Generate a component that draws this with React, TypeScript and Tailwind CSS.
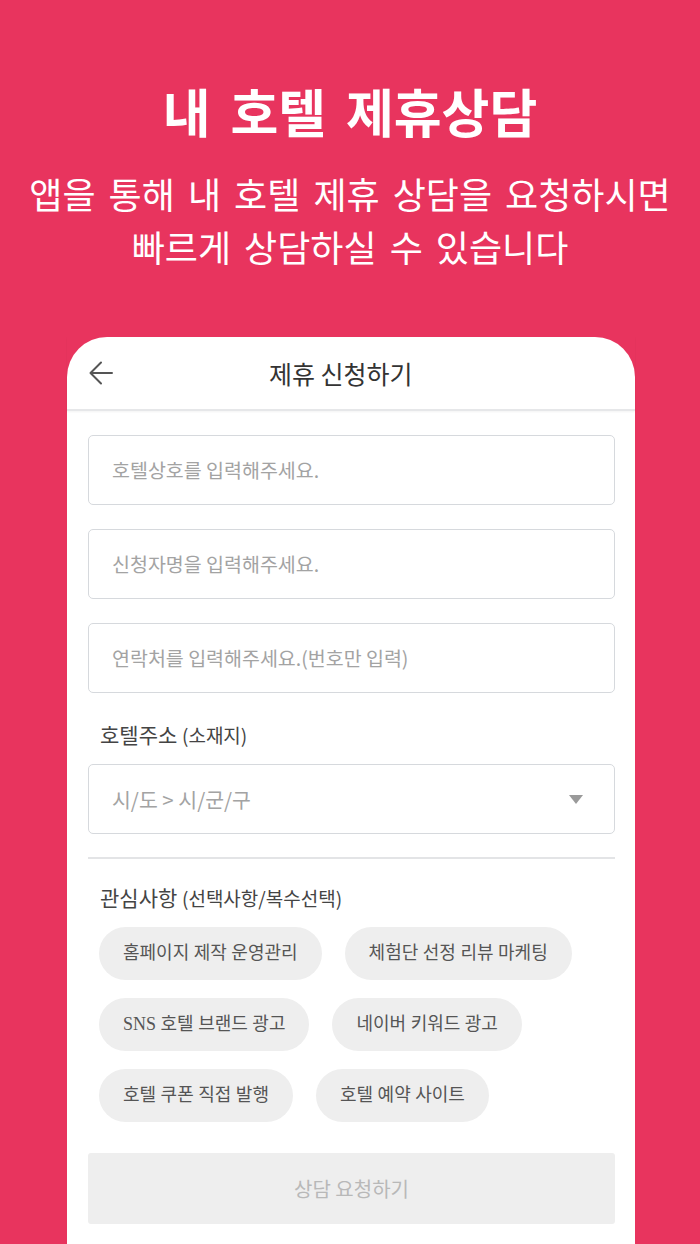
const chipRows = [
  ["홈페이지 제작 운영관리", "체험단 선정 리뷰 마케팅"],
  ["SNS 호텔 브랜드 광고", "네이버 키워드 광고"],
  ["호텔 쿠폰 직접 발행", "호텔 예약 사이트"],
];

const inputs = [
  "호텔상호를 입력해주세요.",
  "신청자명을 입력해주세요.",
  "연락처를 입력해주세요.(번호만 입력)",
];

const kr = "font-['Noto_Sans_CJK_KR',sans-serif]";

function BackArrow() {
  return (
    <svg width="26" height="26" viewBox="0 0 26 26" fill="none">
      <path
        d="M24 13H3M13 2.5L2.5 13L13 23.5"
        stroke="#555"
        strokeWidth="2"
        strokeLinecap="round"
        strokeLinejoin="round"
      />
    </svg>
  );
}

export default function App() {
  return (
    <div className={`h-[1244px] overflow-hidden bg-[#e8345e] ${kr}`}>
      <div className="pt-[85px] text-center text-white">
        <h1 className="text-[52px] font-bold leading-[52px] [word-spacing:8px]">내 호텔 제휴상담</h1>
        <p className="mt-[30px] text-[36px] leading-[53px] [word-spacing:5px]">
          앱을 통해 내 호텔 제휴 상담을 요청하시면
          <br />
          빠르게 상담하실 수 있습니다
        </p>
      </div>

      <div className="ml-[67px] mt-[64px] w-[568px] rounded-t-[40px] bg-white pb-10">
        <div className="flex h-[74px] items-center border-b-2 border-[#e6e7e9] pl-[21px] shadow-[0_1px_2px_rgba(0,0,0,0.05)]">
          <BackArrow />
          <span className="ml-[155px] text-[25px] leading-none text-[#333]">제휴 신청하기</span>
        </div>

        <div className="pl-[21px] pr-[20px] pt-[24px]">
          <div className="flex flex-col gap-[24px]">
            {inputs.map((p) => (
              <div
                key={p}
                className="flex h-[70px] items-center rounded-[5px] border-[1.5px] border-[#d6d9dd] px-[23px] text-[19.5px] text-[#a3a3a3]"
              >
                {p}
              </div>
            ))}
          </div>

          <div className="mt-[27px] pl-[12px] text-[21px] leading-[28px] text-[#444]">
            호텔주소 <span className="text-[19px]">(소재지)</span>
          </div>

          <div className="mt-[15px] flex h-[70px] items-center justify-between rounded-[5px] border-[1.5px] border-[#d6d9dd] pl-[23px] pr-[31px] text-[20.5px] text-[#a3a3a3]">
            <span>시/도 &gt; 시/군/구</span>
            <svg width="14" height="9" viewBox="0 0 14 9">
              <path d="M0 0H14L7 9Z" fill="#9a9a9a" />
            </svg>
          </div>

          <div className="mt-[23px] h-[2px] bg-[#e3e4e6]" />

          <div className="mt-[24px] pl-[12px] text-[21px] leading-[28px] text-[#444]">
            관심사항 <span className="text-[19px]">(선택사항/복수선택)</span>
          </div>

          <div className="mt-[15px] flex flex-col gap-[18px] pl-[11px]">
            {chipRows.map((row, i) => (
              <div key={i} className="flex gap-[23px]">
                {row.map((c) => (
                  <span
                    key={c}
                    className="flex h-[53px] items-center rounded-full bg-[#eeeeee] px-[24px] font-['Liberation_Serif','Noto_Sans_CJK_KR',serif] text-[18px] text-[#555]"
                  >
                    {c}
                  </span>
                ))}
              </div>
            ))}
          </div>

          <button className="mt-[31px] flex h-[71px] w-full items-center justify-center rounded-[3px] bg-[#eeeeee] text-[20px] text-[#b8b8b8]">
            상담 요청하기
          </button>
        </div>
      </div>
    </div>
  );
}
